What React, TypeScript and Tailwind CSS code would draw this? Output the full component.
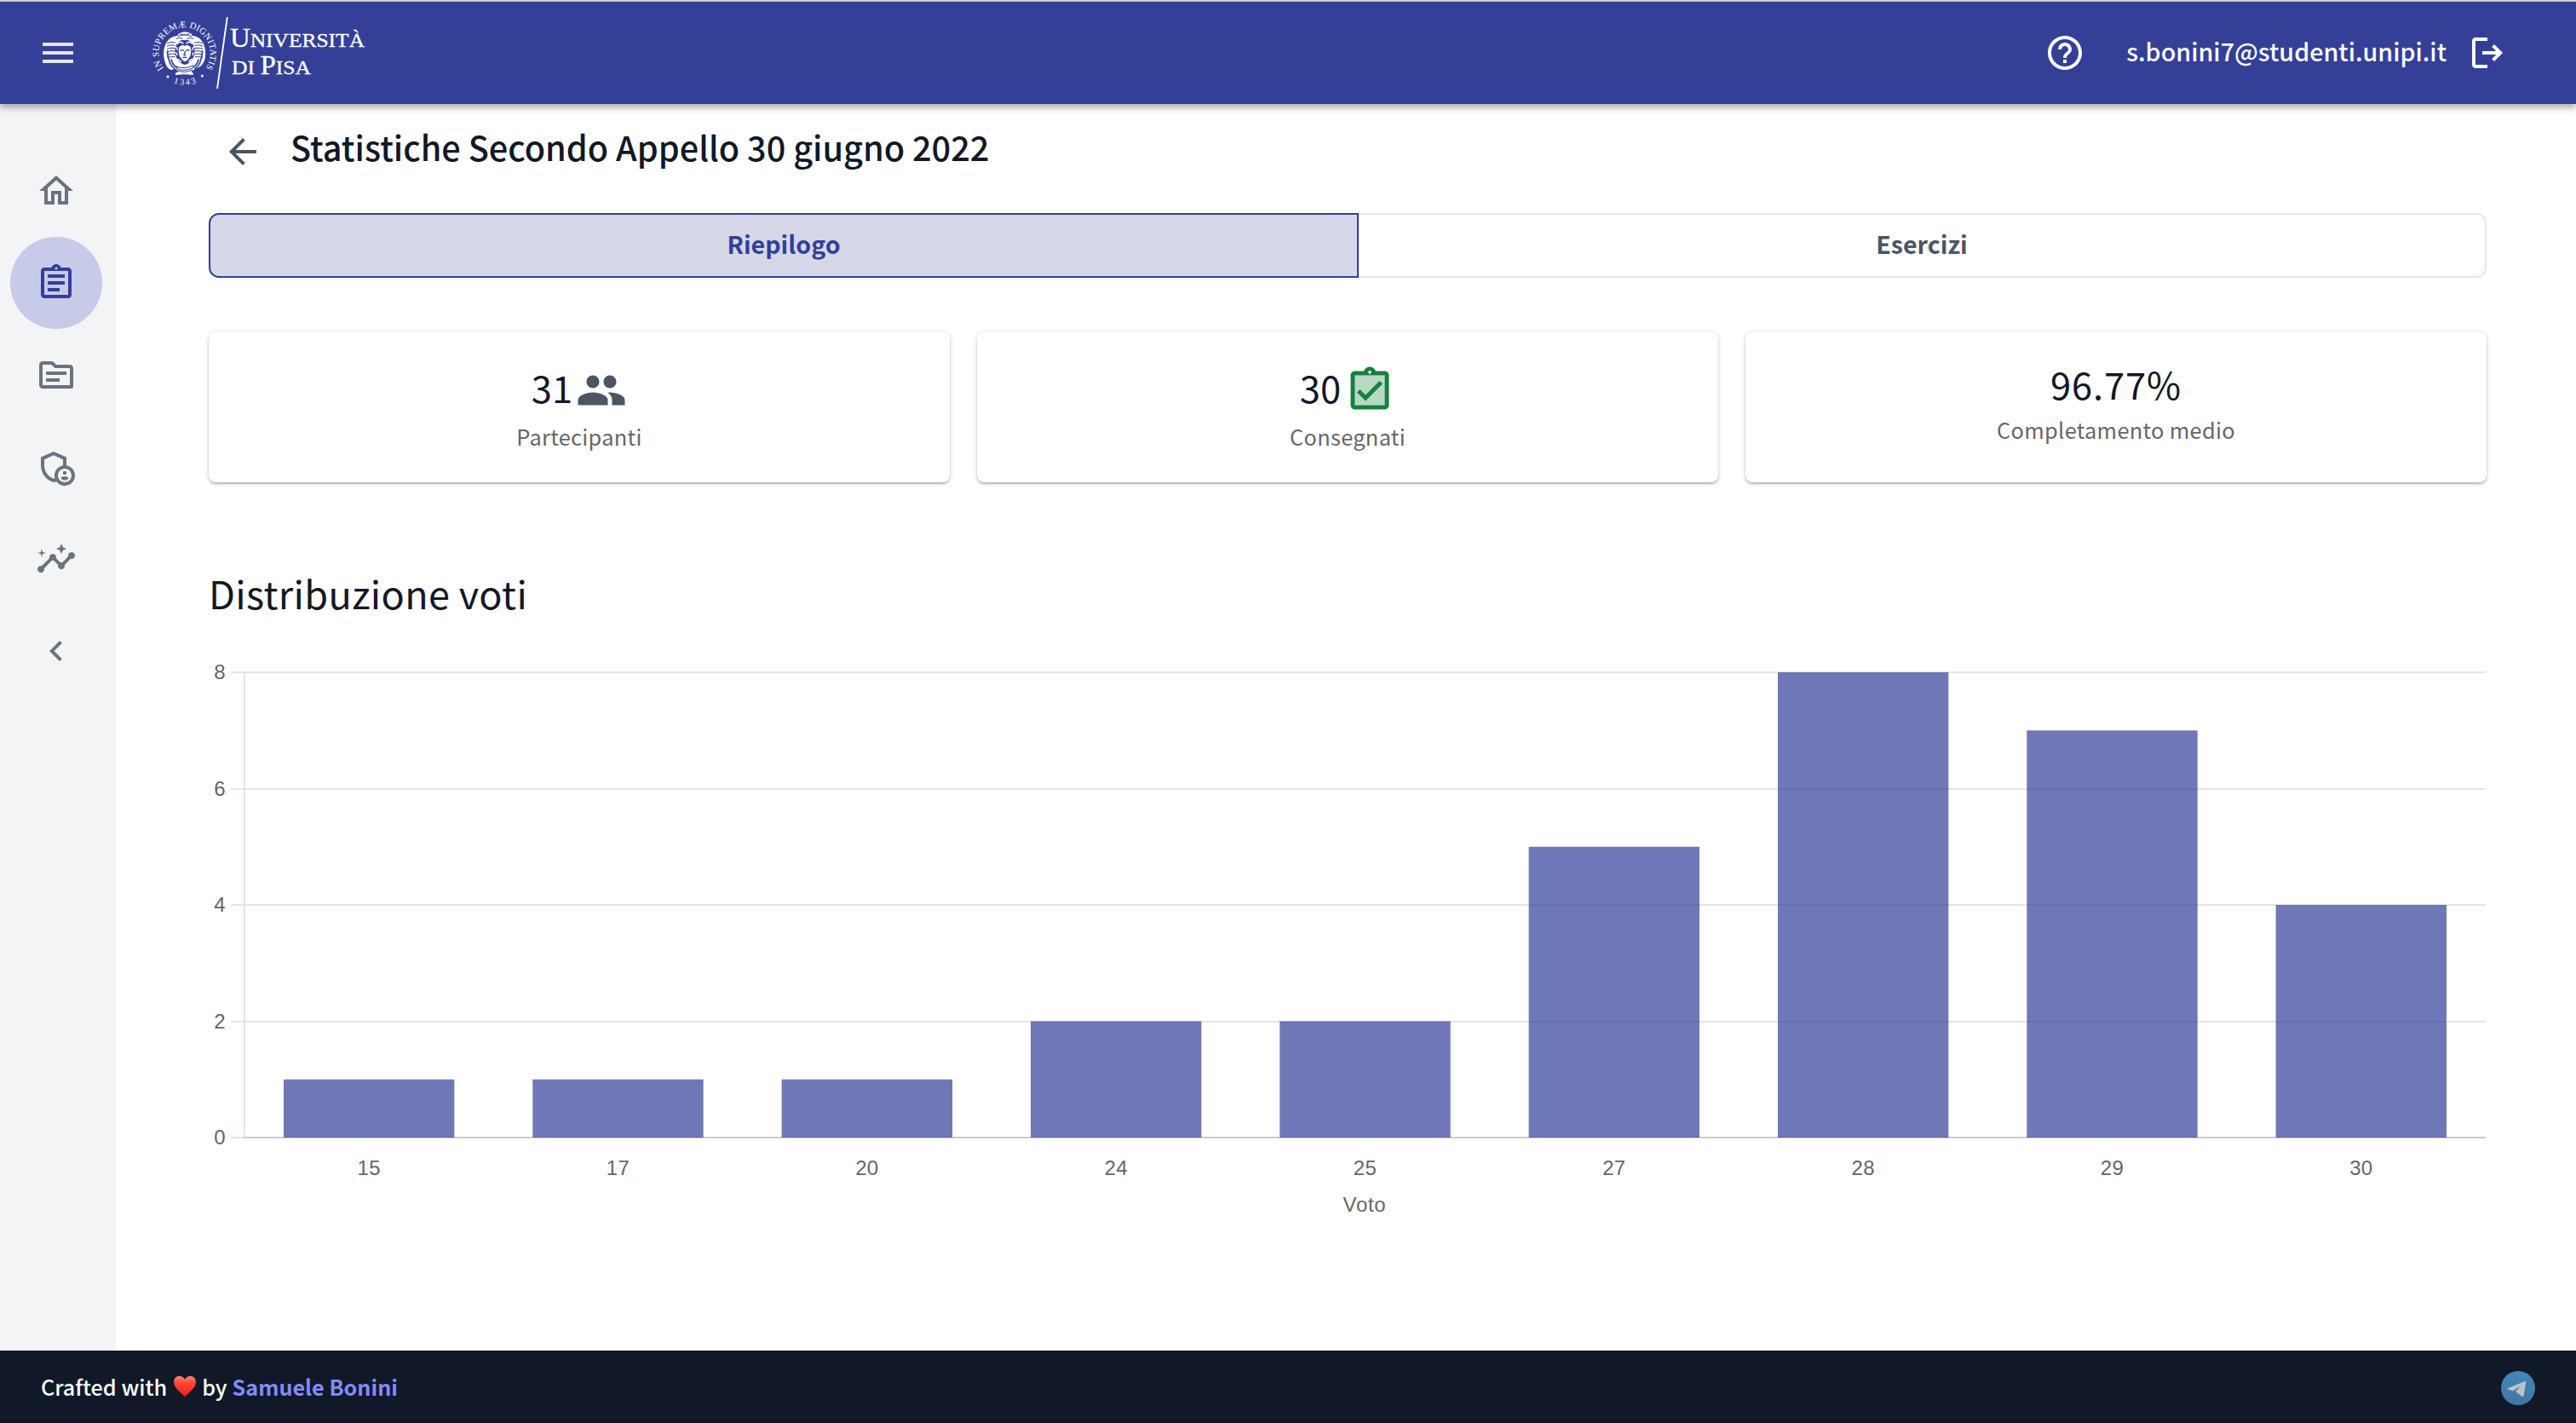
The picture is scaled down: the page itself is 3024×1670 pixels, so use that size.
import React from "react";
import {
  MdMenu,
  MdHelpOutline,
  MdOutlineHome,
  MdOutlineAssignment,
  MdOutlineTopic,
  MdOutlineAdminPanelSettings,
  MdInsights,
  MdChevronLeft,
  MdArrowBack,
  MdPeople,
} from "react-icons/md";

const grades = [
  { voto: "15", count: 1 },
  { voto: "17", count: 1 },
  { voto: "20", count: 1 },
  { voto: "24", count: 2 },
  { voto: "25", count: 2 },
  { voto: "27", count: 5 },
  { voto: "28", count: 8 },
  { voto: "29", count: 7 },
  { voto: "30", count: 4 },
];

function Seal() {
  const feathers = [0, 1, 2, 3, 4, 5];
  return (
    <svg className="h-[86px] w-[80px] shrink-0" viewBox="-120 -129 240 258">
      <defs>
        <path id="motto" d="M -74 56 A 91 91 0 1 1 72 56" />
        <path id="year" d="M -60 96 A 113 113 0 0 0 60 96" />
      </defs>
      <g fill="#fff" fontFamily="'Liberation Serif', serif">
        <text fontSize="32">
          <textPath href="#motto" textLength="398" startOffset="1">IN SUPREMÆ DIGNITATIS</textPath>
        </text>
        <text fontSize="31">
          <textPath href="#year" startOffset="50%" textAnchor="middle" textLength="82">1343</textPath>
        </text>
        <circle cx="-60" cy="84" r="4.5" />
        <circle cx="61" cy="81" r="4.5" />
        <path d="M-26 -60 C-62 -58 -78 -22 -74 14 C-70 42 -58 60 -46 60 L-34 56 L-22 66 L-34 72 L-32 78 L-4 76 L4 76 L28 78 L30 72 L22 66 L40 54 C56 50 68 38 72 14 C76 -22 62 -58 26 -60 C24 -78 -22 -78 -26 -60Z" />
      </g>
      <g fill="none" stroke="#343f98" strokeWidth="3" strokeLinecap="round">
        {feathers.map((i) => (
          <path key={i} d={`M${-34 - (i % 2) * 2} ${-36 + i * 10} Q-48 ${-42 + i * 11} -62 ${-34 + i * 10}`} />
        ))}
        {feathers.map((i) => (
          <path key={i} d={`M${34 + (i % 2) * 2} ${-36 + i * 10} Q48 ${-42 + i * 11} 62 ${-34 + i * 10}`} />
        ))}
        <path d="M-62 -6 Q-58 42 -36 56 M62 -6 Q58 42 36 56 M-48 24 Q-44 42 -28 52 M48 24 Q44 42 28 52" strokeWidth="5" />
        <path d="M-24 -58 Q0 -70 24 -58 M-16 -66 Q2 -58 16 -68 M-30 -50 Q-20 -56 -8 -50 M30 -50 Q20 -56 8 -50" />
        <path d="M-30 48 Q0 60 30 44 M-30 56 Q0 68 30 52 M-24 63 Q2 73 26 60" />
      </g>
      <path d="M-30 -28 Q-40 -2 -30 16 Q-20 38 0 42 Q20 38 30 16 Q40 -2 30 -28 Q16 -50 0 -44 Q-18 -50 -30 -28Z" fill="#343f98" />
      <path d="M-20 -20 Q-25 4 -16 16 Q-6 30 0 30 Q8 30 16 16 Q25 4 20 -20 Q10 -32 0 -24 Q-10 -32 -20 -20Z" fill="#fff" />
      <g fill="none" stroke="#fff" strokeWidth="4" strokeLinecap="round">
        <path d="M-26 -32 Q-16 -44 -6 -33 M26 -32 Q16 -44 6 -33 M-32 -18 Q-26 -22 -27 -10 M32 -18 Q26 -22 27 -10 M-33 0 Q-27 0 -28 8 M33 0 Q27 0 28 8 M-24 22 Q-18 26 -14 32 M24 22 Q18 26 14 32" />
      </g>
      <g fill="none" stroke="#343f98" strokeWidth="4" strokeLinecap="round">
        <path d="M-15 -8 Q-10 -12 -5 -8 M5 -8 Q10 -12 15 -8 M1 -5 L-3 8 H3 M-6 17 Q0 14 6 17" />
      </g>
    </svg>
  );
}

function Header() {
  return (
    <header className="relative z-10 flex h-[122px] shrink-0 items-center border-t-2 border-[#cdcdce] bg-[#343f98] pl-[44px] pr-[80px] text-white shadow-[0_4px_8px_rgba(0,0,0,0.35)]">
      <MdMenu className="size-12 text-[#e5e7eb]" />
      <div className="ml-[85px] flex items-center">
        <Seal />
        <svg className="-ml-[3px] h-[86px] w-[180px]" viewBox="254 19 180 86" fill="#fff" fontFamily="'Liberation Serif', serif">
          <path d="M266.8 20 L255 104" stroke="#fff" strokeWidth="1.8" />
          <g stroke="#fff" strokeWidth="0.3">
            <text x="270" y="54.500" textLength="158" lengthAdjust="spacingAndGlyphs" fontSize="31">
              U<tspan fontSize="24">NIVERSITÀ</tspan>
            </text>
            <text x="272" y="86.500" textLength="93" lengthAdjust="spacingAndGlyphs" fontSize="24">
              DI <tspan fontSize="31">P</tspan>ISA
            </text>
          </g>
        </svg>
      </div>
      <div className="ml-auto flex items-center">
        <MdHelpOutline className="size-12" />
        <span className="-mt-[4px] ml-[48px] text-[28.700px] font-medium leading-10">s.bonini7@studenti.unipi.it</span>
        <svg className="ml-[24px] size-12" viewBox="0 0 24 24" fill="currentColor">
          <path d="M5 21q-.825 0-1.413-.588T3 19V5q0-.825.587-1.413T5 3h7v2H5v14h7v2H5zm11-4l-1.375-1.45 2.55-2.55H9v-2h8.175l-2.55-2.55L16 7l5 5z" />
        </svg>
      </div>
    </header>
  );
}

function Sidebar() {
  const item = "flex size-[108px] items-center justify-center rounded-full";
  return (
    <nav className="flex w-[136px] shrink-0 flex-col bg-[#f3f4f6] pl-[12px] pt-[48px] text-[#6b7280]">
      <a className={item}><MdOutlineHome className="size-12" /></a>
      <a className="flex size-[108px] items-center justify-center rounded-full bg-[#c8cae9] text-[#343f98]">
        <MdOutlineAssignment className="size-12" />
      </a>
      <a className={item}><MdOutlineTopic className="size-12" /></a>
      <a className={item}><MdOutlineAdminPanelSettings className="size-12" /></a>
      <a className={item}><MdInsights className="size-12" /></a>
      <a className={item}><MdChevronLeft className="size-12" /></a>
    </nav>
  );
}

function SubmittedIcon() {
  return (
    <svg className="ml-[4px] mt-[5px] size-[60px] text-[#15803d]" viewBox="0 0 24 24" fill="currentColor">
      <path d="M5 5h14v14H5z" opacity=".3" />
      <path d="M19 3h-4.180C14.400 1.840 13.300 1 12 1c-1.300 0-2.400.84-2.820 2H5c-1.100 0-2 .9-2 2v14c0 1.100.9 2 2 2h14c1.100 0 2-.9 2-2V5c0-1.100-.9-2-2-2zm-7-.25c.41 0 .75.34.75.75s-.34.75-.75.75-.75-.34-.75-.75.34-.75.75-.75zM19 19H5V5h14v14z" />
      <path d="M17.990 9l-1.410-1.420-6.590 6.590-2.580-2.570-1.420 1.410 4 3.990z" />
    </svg>
  );
}

function Card({ value, label, icon }: { value: string; label: string; icon?: React.ReactNode }) {
  return (
    <div className="flex h-[176px] flex-col items-center rounded-lg bg-white pt-[34px] shadow-[0_2px_2px_rgba(0,0,0,0.2),0_1px_6px_rgba(0,0,0,0.16)]">
      <div className={icon ? "flex h-[62px] items-center text-[43.500px] text-[#111827]" : "flex h-[54px] items-center text-[43.500px] tracking-[0.9px] text-[#111827]"}>
        <span className="leading-[60px]">{value}</span>
        {icon}
      </div>
      <span className="mt-[8px] text-[25.400px] leading-9 tracking-[0.3px] text-[#666]">{label}</span>
    </div>
  );
}

function Chart() {
  const left = 287;
  const right = 2918;
  const base = 1335;
  const unit = 68.25;
  const step = (right - left) / grades.length;
  return (
    <svg
      className="mt-[40px] h-[670px] w-[2674px]"
      viewBox="245 770 2674 670"
      fontFamily="'Liberation Sans', sans-serif"
      fontSize="24"
      fill="#666"
    >
      {[0, 2, 4, 6, 8].map((v) => (
        <g key={v}>
          <rect x="271" y={Math.round(base - v * unit) - 1} width={right - 271} height="2" fill="#e5e5e5" />
          <text x="264.500" y={base - v * unit + 8} textAnchor="end">{v}</text>
        </g>
      ))}
      <rect x="286" y="788" width="2" height="548" fill="#e5e5e5" />
      <rect x="286" y="1334" width={right - 286} height="2" fill="#cbcbcb" />
      {grades.map((g, i) => {
        const cx = left + step * (i + 0.5);
        return (
          <g key={g.voto}>
            <rect x={cx - 100.2} y={base - g.count * unit} width="200.400" height={g.count * unit} fill="#323e98" fillOpacity="0.7" />
            <text x={cx} y="1379" textAnchor="middle" letterSpacing="0.3">{g.voto}</text>
          </g>
        );
      })}
      <text x="1602" y="1422" textAnchor="middle" letterSpacing="0.7">Voto</text>
    </svg>
  );
}

function Heart() {
  return (
    <svg className="ml-[7px] mr-[6px] h-[26px] w-[28px]" viewBox="0 0 28 26">
      <defs>
        <linearGradient id="heart" x1="0" y1="0" x2="0" y2="1">
          <stop offset="0" stopColor="#ff8a78" />
          <stop offset="0.3" stopColor="#ff4a36" />
          <stop offset="1" stopColor="#f01c10" />
        </linearGradient>
      </defs>
      <path d="M14 25.500C11 21 1 15.500 1 8C1 3.500 4 1 7.500 1C10.500 1 13 2.500 14 5C15 2.500 17.500 1 20.500 1C24 1 27 3.500 27 8C27 15.500 17 21 14 25.500Z" fill="url(#heart)" />
    </svg>
  );
}

function Footer() {
  return (
    <footer className="flex h-[85px] shrink-0 items-center justify-between border-b border-[#0b0e18] bg-[#111827] pl-[48px] pr-[48px] pt-[4px] text-[25.200px] leading-10 text-white">
      <div className="-mt-[4px] flex items-center font-medium">
        <span>Crafted with</span>
        <Heart />
        <span>by</span>
        <a className="ml-[6px] font-bold text-[#818cf8]">Samuele Bonini</a>
      </div>
      <svg className="size-10" viewBox="0 0 40 40">
        <defs>
          <linearGradient id="tg" x1="0" y1="0" x2="0" y2="1">
            <stop offset="0" stopColor="#4586bb" />
            <stop offset="1" stopColor="#3d78a3" />
          </linearGradient>
        </defs>
        <circle cx="20" cy="20" r="20" fill="url(#tg)" />
        <path d="M8 20.300L27.500 12.200C28.700 11.700 29.400 12.400 29.200 13.500L26.700 28.600C26.500 30 25.500 30.400 24.400 29.700L17.200 24.300L22.800 17.700L14 23.200L8.300 21.600C7.300 21.300 7.300 20.600 8 20.300Z" fill="#c0c1c6" />
      </svg>
    </footer>
  );
}

export default function App() {
  return (
    <div className="flex h-[1670px] w-[3024px] flex-col overflow-hidden bg-white font-['Noto_Sans_CJK_SC','Noto_Sans',sans-serif]">
      <Header />
      <div className="flex min-h-0 flex-1">
        <Sidebar />
        <main className="min-w-0 flex-1 pl-[109px] pr-[105px] pt-8">
          <div className="flex h-12 items-center pl-4">
            <MdArrowBack className="size-12 text-[#4b5563]" />
            <h1 className="-mt-[13px] ml-[32px] text-[39.650px] font-medium leading-[48px] text-[#111827]">
              Statistiche Secondo Appello 30 giugno 2022
            </h1>
          </div>
          <div className="mt-12 flex h-[76px] text-[28.600px] font-bold leading-10">
            <button className="flex w-[1350px] items-center justify-center rounded-l-xl border-2 border-[#343f98] bg-[#d6d8ea] pb-[4px] text-[#343f98]">
              Riepilogo
            </button>
            <button className="flex flex-1 items-center justify-center rounded-r-xl border-2 border-l-0 border-[#e5e7eb] pb-[4px] text-[#4b5563]">
              Esercizi
            </button>
          </div>
          <div className="mt-16 grid grid-cols-3 gap-8">
            <Card value="31" label="Partecipanti" icon={<MdPeople className="ml-[4px] mt-[5px] size-[60px] text-[#4b5563]" />} />
            <Card value="30" label="Consegnati" icon={<SubmittedIcon />} />
            <Card value="96.77%" label="Completamento medio" />
          </div>
          <h2 className="mt-[98px] h-[66px] text-[45px] leading-[64px] tracking-[0.35px] text-[#111827]">
            Distribuzione voti
          </h2>
          <Chart />
        </main>
      </div>
      <Footer />
    </div>
  );
}
